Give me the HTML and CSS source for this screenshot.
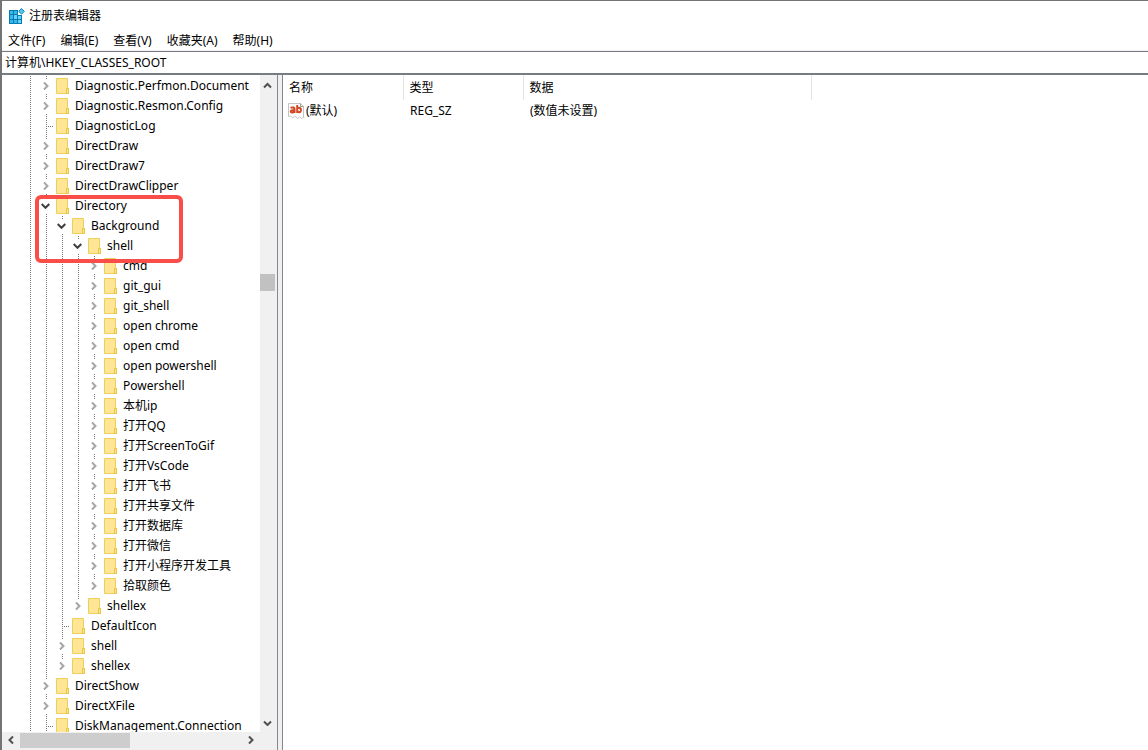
FILE: index.html
```html
<!DOCTYPE html>
<html lang="zh-CN">
<head>
<meta charset="utf-8">
<title>注册表编辑器</title>
<link rel="stylesheet" href="styles.css">
</head>
<body>
<svg class="defs" aria-hidden="true">
  <symbol id="folder" viewBox="0 0 14 16">
    <path d="M.5.5h11v10h1v5H.5z" fill="#ffe697" stroke="#f0cf58"/>
    <path d="M10.500 15.500v-5h2v5z" fill="#ffe48a" stroke="#eac540"/>
  </symbol>
  <symbol id="closed" viewBox="0 0 9 10"><path d="M3 1.500 6.500 5 3 8.500" fill="none" stroke="#a6a6a6" stroke-width="2"/></symbol>
  <symbol id="open" viewBox="0 0 9 10"><path d="M.7 3 4.500 6.800 8.300 3" fill="none" stroke="#404040" stroke-width="2"/></symbol>
</svg>
<main class="window">
  <header class="titlebar">
    <svg class="app-icon" viewBox="0 0 16 16" aria-hidden="true">
      <path d="M0 2h9v5h4v9H0z" fill="#087caf"/>
      <path d="M1 3h3v3H1zM5 3h3v3H5zM1 7h3v4H1zM1 12h3v3H1zM5 12h3v3H5z" fill="#35b9ed"/>
      <path d="M5 7h3v4H5zM9 8h3v3H9zM9 12h3v3H9z" fill="#66d2fb"/>
      <path d="m12.500.5 2.800 2.800-2.800 2.800-2.800-2.800z" fill="#55c5ef" stroke="#0783b8"/>
    </svg>
    <h1>注册表编辑器</h1>
  </header>
  <nav class="menu">
    <button>文件(F)</button><button>编辑(E)</button><button>查看(V)</button><button>收藏夹(A)</button><button>帮助(H)</button>
  </nav>
  <input class="address" type="text" aria-label="地址" value="计算机\HKEY_CLASSES_ROOT">
  <div class="panes">
    <section class="keys">
      <div class="viewport">
        <ul class="tree">
          <li><div class="row"><button class="twist" aria-label="展开"><svg><use href="#closed"/></svg></button><svg class="folder"><use href="#folder"/></svg><span>Diagnostic.Perfmon.Document</span></div></li>
          <li><div class="row"><button class="twist" aria-label="展开"><svg><use href="#closed"/></svg></button><svg class="folder"><use href="#folder"/></svg><span>Diagnostic.Resmon.Config</span></div></li>
          <li><div class="row"><i class="stub"></i><svg class="folder"><use href="#folder"/></svg><span>DiagnosticLog</span></div></li>
          <li><div class="row"><button class="twist" aria-label="展开"><svg><use href="#closed"/></svg></button><svg class="folder"><use href="#folder"/></svg><span>DirectDraw</span></div></li>
          <li><div class="row"><button class="twist" aria-label="展开"><svg><use href="#closed"/></svg></button><svg class="folder"><use href="#folder"/></svg><span>DirectDraw7</span></div></li>
          <li><div class="row"><button class="twist" aria-label="展开"><svg><use href="#closed"/></svg></button><svg class="folder"><use href="#folder"/></svg><span>DirectDrawClipper</span></div></li>
          <li><div class="row"><button class="twist" aria-label="折叠"><svg><use href="#open"/></svg></button><svg class="folder"><use href="#folder"/></svg><span>Directory</span></div>
            <ul>
              <li><div class="row"><button class="twist" aria-label="折叠"><svg><use href="#open"/></svg></button><svg class="folder"><use href="#folder"/></svg><span>Background</span></div>
                <ul>
                  <li><div class="row"><button class="twist" aria-label="折叠"><svg><use href="#open"/></svg></button><svg class="folder"><use href="#folder"/></svg><span>shell</span></div>
                    <ul>
                      <li><div class="row"><button class="twist" aria-label="展开"><svg><use href="#closed"/></svg></button><svg class="folder"><use href="#folder"/></svg><span>cmd</span></div></li>
                      <li><div class="row"><button class="twist" aria-label="展开"><svg><use href="#closed"/></svg></button><svg class="folder"><use href="#folder"/></svg><span>git_gui</span></div></li>
                      <li><div class="row"><button class="twist" aria-label="展开"><svg><use href="#closed"/></svg></button><svg class="folder"><use href="#folder"/></svg><span>git_shell</span></div></li>
                      <li><div class="row"><button class="twist" aria-label="展开"><svg><use href="#closed"/></svg></button><svg class="folder"><use href="#folder"/></svg><span>open chrome</span></div></li>
                      <li><div class="row"><button class="twist" aria-label="展开"><svg><use href="#closed"/></svg></button><svg class="folder"><use href="#folder"/></svg><span>open cmd</span></div></li>
                      <li><div class="row"><button class="twist" aria-label="展开"><svg><use href="#closed"/></svg></button><svg class="folder"><use href="#folder"/></svg><span>open powershell</span></div></li>
                      <li><div class="row"><button class="twist" aria-label="展开"><svg><use href="#closed"/></svg></button><svg class="folder"><use href="#folder"/></svg><span>Powershell</span></div></li>
                      <li><div class="row"><button class="twist" aria-label="展开"><svg><use href="#closed"/></svg></button><svg class="folder"><use href="#folder"/></svg><span>本机ip</span></div></li>
                      <li><div class="row"><button class="twist" aria-label="展开"><svg><use href="#closed"/></svg></button><svg class="folder"><use href="#folder"/></svg><span>打开QQ</span></div></li>
                      <li><div class="row"><button class="twist" aria-label="展开"><svg><use href="#closed"/></svg></button><svg class="folder"><use href="#folder"/></svg><span>打开ScreenToGif</span></div></li>
                      <li><div class="row"><button class="twist" aria-label="展开"><svg><use href="#closed"/></svg></button><svg class="folder"><use href="#folder"/></svg><span>打开VsCode</span></div></li>
                      <li><div class="row"><button class="twist" aria-label="展开"><svg><use href="#closed"/></svg></button><svg class="folder"><use href="#folder"/></svg><span>打开飞书</span></div></li>
                      <li><div class="row"><button class="twist" aria-label="展开"><svg><use href="#closed"/></svg></button><svg class="folder"><use href="#folder"/></svg><span>打开共享文件</span></div></li>
                      <li><div class="row"><button class="twist" aria-label="展开"><svg><use href="#closed"/></svg></button><svg class="folder"><use href="#folder"/></svg><span>打开数据库</span></div></li>
                      <li><div class="row"><button class="twist" aria-label="展开"><svg><use href="#closed"/></svg></button><svg class="folder"><use href="#folder"/></svg><span>打开微信</span></div></li>
                      <li><div class="row"><button class="twist" aria-label="展开"><svg><use href="#closed"/></svg></button><svg class="folder"><use href="#folder"/></svg><span>打开小程序开发工具</span></div></li>
                      <li><div class="row"><button class="twist" aria-label="展开"><svg><use href="#closed"/></svg></button><svg class="folder"><use href="#folder"/></svg><span>拾取颜色</span></div></li>
                    </ul>
                  </li>
                  <li><div class="row"><button class="twist" aria-label="展开"><svg><use href="#closed"/></svg></button><svg class="folder"><use href="#folder"/></svg><span>shellex</span></div></li>
                </ul>
              </li>
              <li><div class="row"><i class="stub"></i><svg class="folder"><use href="#folder"/></svg><span>DefaultIcon</span></div></li>
              <li><div class="row"><button class="twist" aria-label="展开"><svg><use href="#closed"/></svg></button><svg class="folder"><use href="#folder"/></svg><span>shell</span></div></li>
              <li><div class="row"><button class="twist" aria-label="展开"><svg><use href="#closed"/></svg></button><svg class="folder"><use href="#folder"/></svg><span>shellex</span></div></li>
            </ul>
          </li>
          <li><div class="row"><button class="twist" aria-label="展开"><svg><use href="#closed"/></svg></button><svg class="folder"><use href="#folder"/></svg><span>DirectShow</span></div></li>
          <li><div class="row"><button class="twist" aria-label="展开"><svg><use href="#closed"/></svg></button><svg class="folder"><use href="#folder"/></svg><span>DirectXFile</span></div></li>
          <li><div class="row"><i class="stub"></i><svg class="folder"><use href="#folder"/></svg><span>DiskManagement.Connection</span></div></li>
        </ul>
        <div class="highlight"></div>
      </div>
      <div class="vbar">
        <button aria-label="向上滚动"><svg viewBox="0 0 10 8"><path d="M1 5.500 4.500 2 8 5.500"/></svg></button>
        <div class="track"><div class="thumb"></div></div>
        <button aria-label="向下滚动"><svg viewBox="0 0 10 8"><path d="M1 3.500 4.500 7 8 3.500"/></svg></button>
      </div>
      <div class="hbar">
        <button aria-label="向左滚动"><svg viewBox="0 0 8 10"><path d="M6 1.500 2.500 5 6 8.500"/></svg></button>
        <div class="track"><div class="thumb"></div></div>
        <button aria-label="向右滚动"><svg viewBox="0 0 8 10"><path d="M2 1.500 5.500 5 2 8.500"/></svg></button>
      </div>
    </section>
    <section class="values">
      <table>
        <colgroup><col class="name"><col class="type"><col class="data"><col></colgroup>
        <thead><tr><th>名称</th><th>类型</th><th>数据</th><td></td></tr></thead>
        <tbody><tr>
          <td><div class="value"><svg viewBox="0 0 16 16" aria-hidden="true"><path d="M.5.5h12l3 3v11l-2 1-2-1.500-2 1.500-2-2-3 1-2-1.500-2 .5z" fill="#fff" stroke="#c4c4c4"/><path d="M12.500.5v3h3" fill="none" stroke="#999"/><g fill="none" stroke="#d24726" stroke-width="2"><path d="M2.500 4.800q4-1.100 4 1.200v4M6.500 7q-3.800-.1-3.800 1.500 0 1 1.500 1 1.300 0 2.300-1M9.200 2v8M9.200 5.800q.8-1.200 2-1.100 1.700.2 1.700 2.200 0 2.100-1.700 2.300-1.200.1-2-1"/></g></svg><span>(默认)</span></div></td>
          <td>REG_SZ</td><td>(数值未设置)</td><td></td>
        </tr></tbody>
      </table>
    </section>
  </div>
</main>
</body>
</html>
```
FILE: styles.css
```css
* { box-sizing: border-box; }
body {
  margin: 0;
  background: #fff;
  color: #000;
  font: 12px/20px "Noto Sans", "Noto Sans CJK SC", sans-serif;
}
button {
  display: flex;
  align-items: center;
  justify-content: center;
  padding: 0;
  border: 0;
  background: none;
  color: inherit;
  font: inherit;
}
ul { margin: 0; padding: 0; list-style: none; }
.defs { position: absolute; width: 0; height: 0; }
.window {
  display: flex;
  flex-direction: column;
  height: 100vh;
  border: solid #747474;
  border-width: 1px 0 0 2px;
}
.titlebar {
  display: flex;
  align-items: center;
  gap: 4px;
  height: 30px;
  padding-left: 7px;
}
.app-icon { width: 16px; height: 16px; }
h1 { margin: 0; font-size: 12px; font-weight: 400; }
.menu {
  display: flex;
  gap: 15px;
  height: 20px;
  padding-left: 6px;
  border-bottom: 1px solid #f0f0f0;
}
.address {
  width: 100%;
  height: 24px;
  padding: 0 3px 2px;
  border: solid #777b82;
  border-width: 1px 0 2px;
  outline: 0;
  color: #000;
  font: inherit;
}
.panes {
  display: grid;
  grid-template-columns: 276px minmax(0, 1fr);
  gap: 4px;
  flex: 1;
  min-height: 0;
  background: #f0f0f0;
}
.keys {
  display: grid;
  grid-template: minmax(0, 1fr) 18px / minmax(0, 1fr) 17px;
  min-height: 0;
  border-right: 1px solid #828790;
  background: #f0f0f0;
}
.viewport {
  position: relative;
  overflow: hidden;
  padding-top: 1px;
  background: #fff;
}
.tree { padding-left: 36px; }
.tree, .tree li {
  background-image: repeating-linear-gradient(#777 0 1px, transparent 1px 2px);
  background-repeat: no-repeat;
  background-size: 1px 100%;
}
.tree { background-position: 28px 0; }
.tree li { background-position: 8px 0; }
.tree ul { padding-left: 16px; }
.tree ul > li:last-child { background-size: 1px 10px; }
.row { display: flex; align-items: center; height: 20px; white-space: nowrap; }
.twist { width: 16px; height: 14px; padding-right: 1px; background: #fff; }
.twist svg { width: 9px; height: 10px; }
.stub {
  width: 7px;
  height: 1px;
  margin-left: 9px;
  background: repeating-linear-gradient(90deg, transparent 0 1px, #777 1px 2px);
}
.folder { width: 14px; height: 16px; margin: 0 5px 0 2px; }
.highlight {
  position: absolute;
  left: 33px;
  top: 120px;
  width: 148px;
  height: 68px;
  border: 4px solid #f94e47;
  border-radius: 6px;
}
.vbar, .hbar { display: flex; background: #f0f0f0; }
.vbar { flex-direction: column; padding: 1px 2px 0 0; }
.vbar button { width: 15px; height: 20px; }
.hbar { grid-column: 1 / -1; padding-right: 17px; }
.hbar button { width: 18px; height: 16px; }
.track { flex: 1; }
.vbar .thumb { height: 17px; margin-top: 178px; background: #c1c1c1; }
.hbar .thumb { width: 110px; height: 15px; margin-top: 1px; background: #cdcdcd; }
.vbar svg { width: 10px; height: 8px; }
.hbar svg { width: 8px; height: 10px; }
.vbar path, .hbar path { fill: none; stroke: #505050; stroke-width: 2; }
.values { border-left: 1px solid #828790; background: #fff; }
table { width: 100%; border-collapse: collapse; table-layout: fixed; }
.name, .type { width: 120px; }
.data { width: 288px; }
th, td { padding: 0 0 0 7px; font-weight: 400; text-align: left; white-space: nowrap; }
th { height: 25px; padding-left: 6px; border-right: 1px solid #e5e5e5; }
tbody td { height: 22px; }
.value { display: flex; align-items: center; gap: 2px; margin-left: -2px; }
.value svg { width: 16px; height: 16px; }
```
